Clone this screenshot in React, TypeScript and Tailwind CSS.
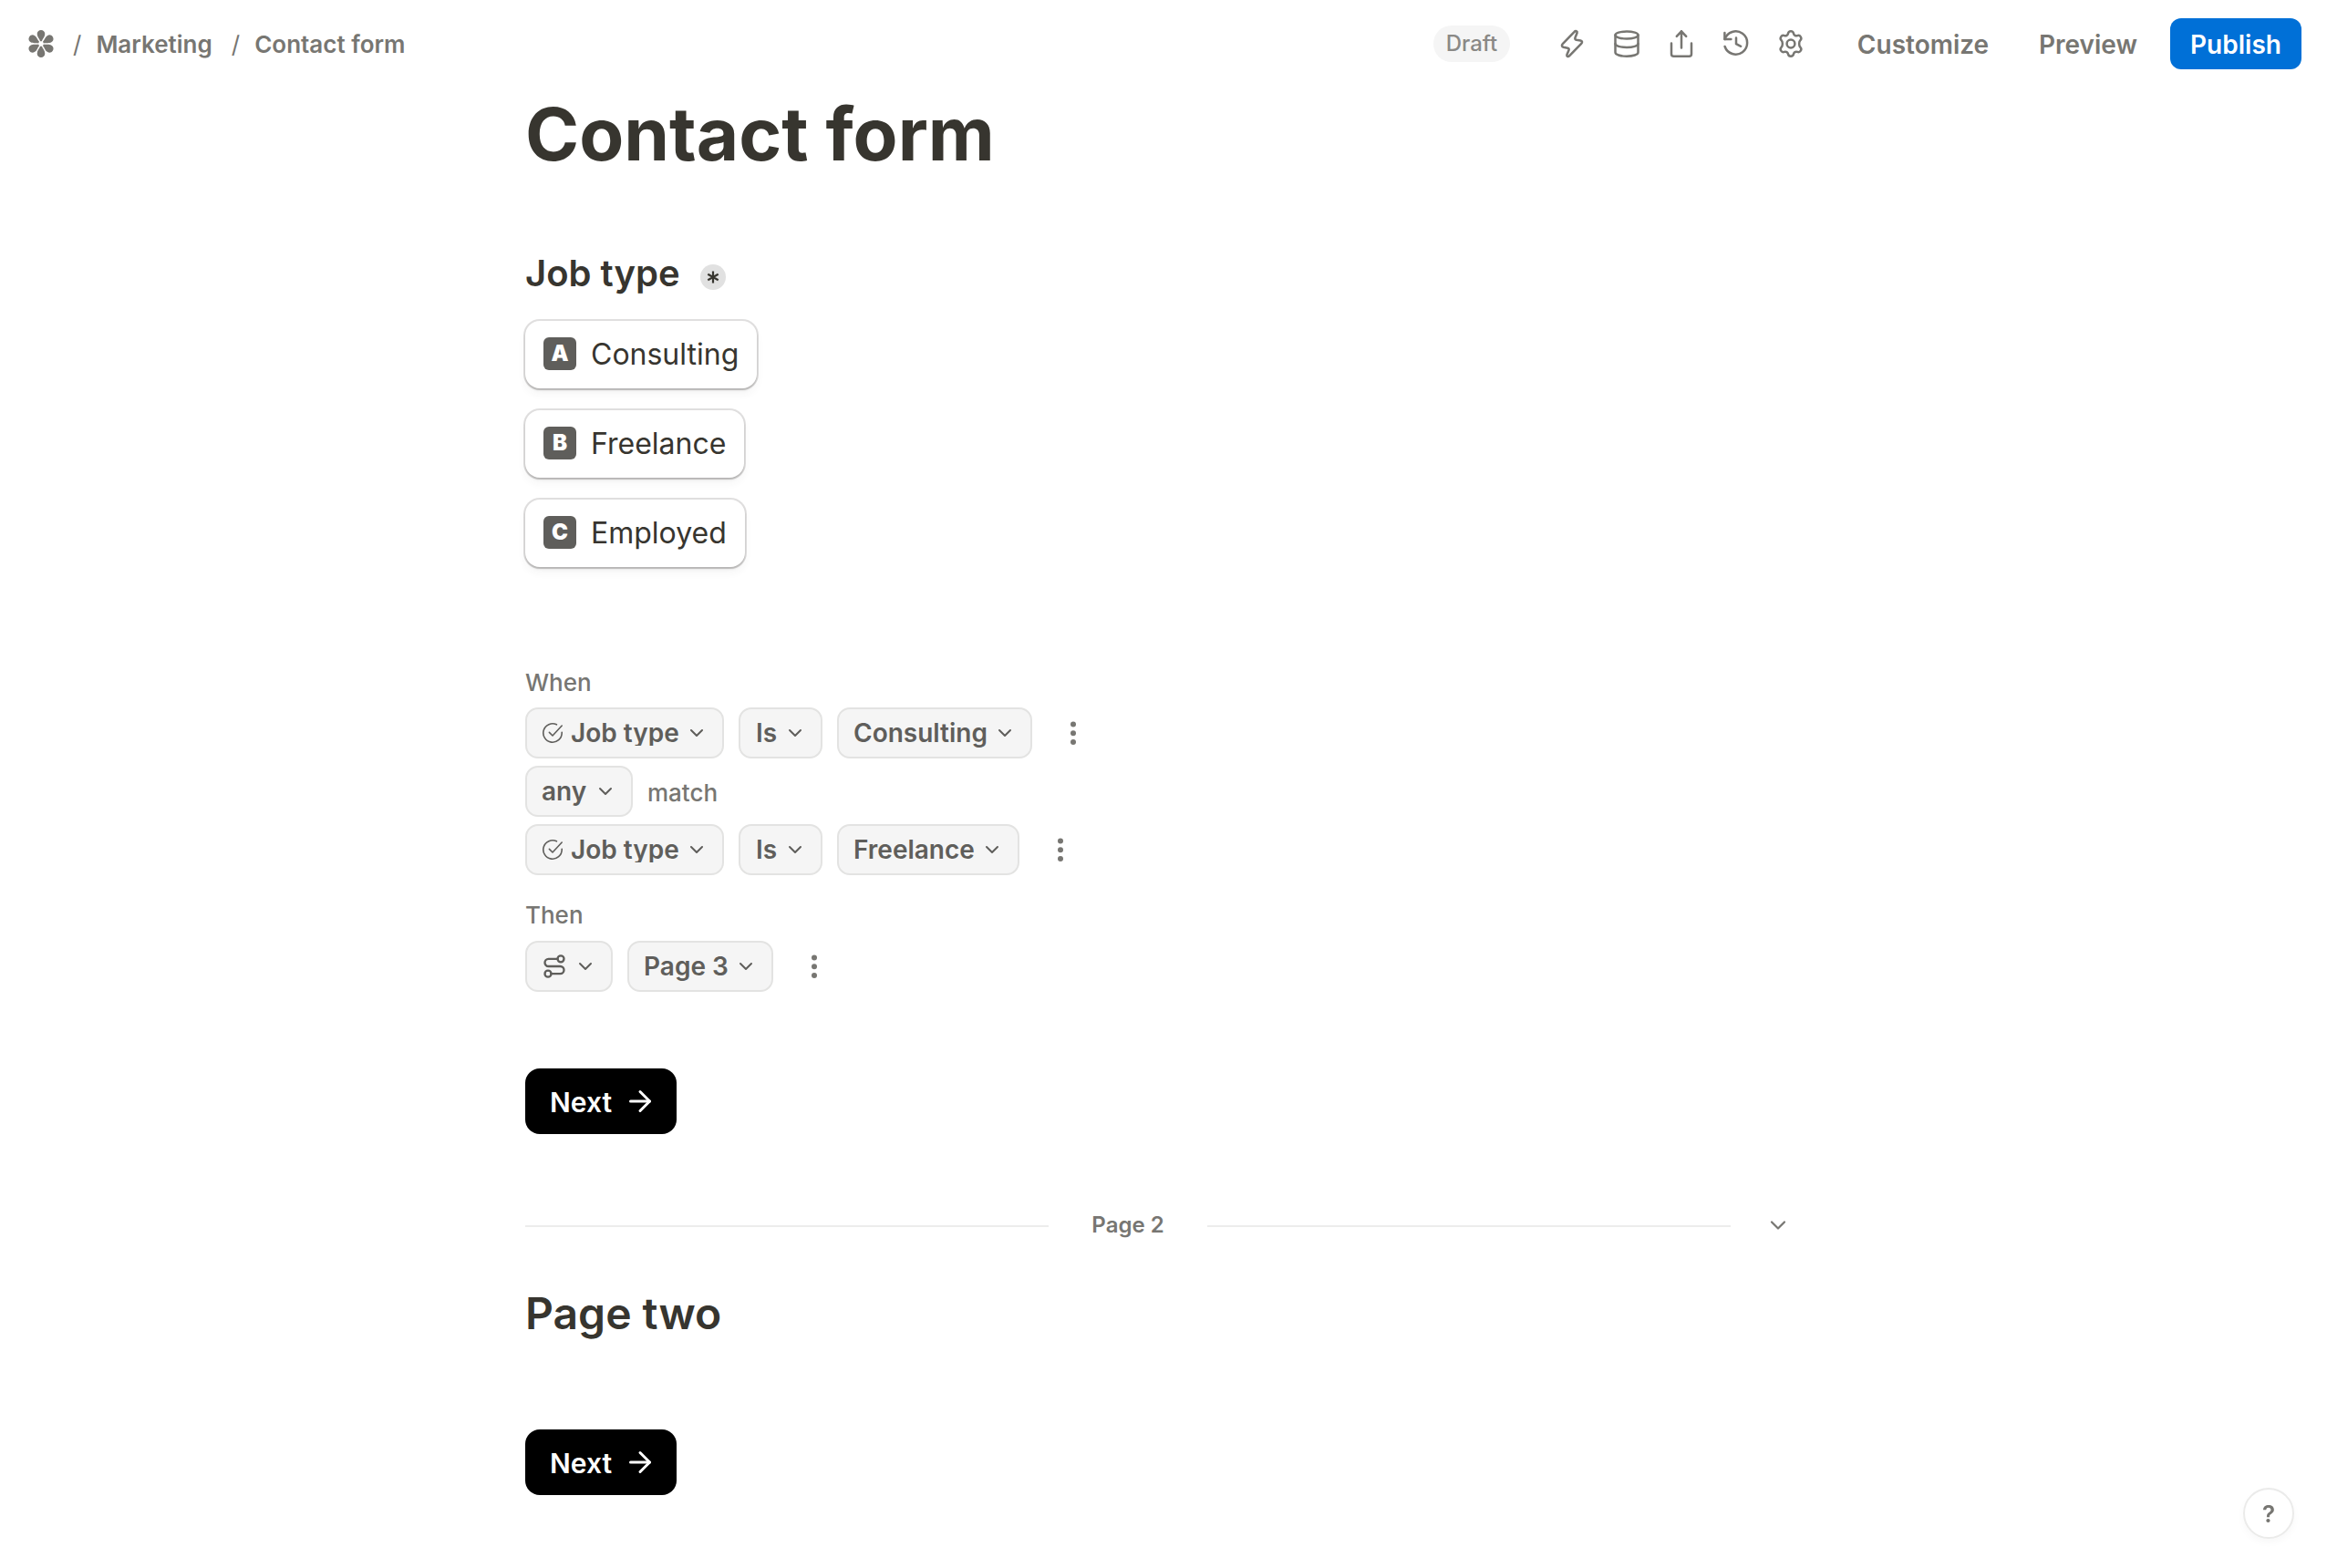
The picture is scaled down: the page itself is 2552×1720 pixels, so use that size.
import type { ReactNode } from 'react';
import { ArrowRight, ChevronDown, Route } from 'lucide-react';

interface IconProps {
  children: ReactNode;
}

const options = [
  { letter: 'A', label: 'Consulting' },
  { letter: 'B', label: 'Freelance' },
  { letter: 'C', label: 'Employed' },
];

function ToolbarIcon({ children }: IconProps) {
  return (
    <button className="flex h-9 w-9 items-center justify-center">
      <svg
        className="h-9 w-9"
        viewBox="-18 -18 36 36"
        fill="none"
        stroke="currentColor"
        strokeWidth={2.5}
        strokeLinecap="round"
        strokeLinejoin="round"
      >
        {children}
      </svg>
    </button>
  );
}

function Logo() {
  return (
    <svg className="h-[30px] w-7" viewBox="-14 -15 28 30" fill="currentColor">
      {[0, 60, 120, 180, 240, 300].map(angle => (
        <path
          key={angle}
          transform={`rotate(${angle})`}
          d="M-.9 -2.8C-1.6 -5.2 -4.3 -7.4 -4.3 -10.7C-4.3 -13.2 -2.4 -14.9 0 -14.9C2.4 -14.9 4.3 -13.2 4.3 -10.7C4.3 -7.4 1.6 -5.2 .9 -2.8Z"
        />
      ))}
    </svg>
  );
}

function CheckIcon() {
  return (
    <svg
      className="mr-2 h-6 w-6 shrink-0"
      viewBox="0 0 24 24"
      fill="none"
      stroke="currentColor"
      strokeWidth={1.6}
      strokeLinecap="round"
      strokeLinejoin="round"
    >
      <path d="M22.2 11.2V12A10.2 10.2 0 1 1 16.4 2.8" />
      <path d="M8.4 11.4 12 15 22.2 4" />
    </svg>
  );
}

function Chip({ children, className }: { children: ReactNode; className?: string }) {
  return (
    <button
      className={`flex h-14 items-center justify-between rounded-[14px] border-2 border-[#e3e3e2] bg-[#f5f5f5] pr-4 text-[28px] leading-[52px] font-semibold text-[#5f5e5b] ${className ?? ''}`}
    >
      {children}
      <ChevronDown className="h-6 w-6 shrink-0" strokeWidth={2} />
    </button>
  );
}

function MoreButton() {
  return (
    <button className="ml-[17px] flex h-14 w-14 items-center justify-center text-[#777672]">
      <svg className="h-7 w-2" viewBox="0 0 8 28" fill="currentColor">
        <circle cx="4" cy="4.4" r="3" />
        <circle cx="4" cy="14.2" r="3" />
        <circle cx="4" cy="24" r="3" />
      </svg>
    </button>
  );
}

function Condition({ value, valueClass }: { value: string; valueClass: string }) {
  return (
    <div className="flex gap-4">
      <Chip className="w-[218px] pl-4">
        <span className="flex items-center">
          <CheckIcon />
          <span className="overflow-hidden leading-none whitespace-nowrap">Job type</span>
        </span>
      </Chip>
      <Chip className="w-[92px] pl-[17px]">Is</Chip>
      <div className="flex">
        <Chip className={valueClass}>{value}</Chip>
        <MoreButton />
      </div>
    </div>
  );
}

function NextButton({ className }: { className: string }) {
  return (
    <button
      className={`flex h-[72px] w-[166px] items-center justify-between rounded-2xl bg-black pr-[22px] pl-[27px] text-[30px] font-semibold text-white ${className}`}
    >
      <span className="pt-0.5">Next</span>
      <ArrowRight className="h-9 w-9" strokeWidth={2} />
    </button>
  );
}

export default function App() {
  return (
    <div className="h-[1720px] w-[2552px] overflow-hidden bg-white font-['Inter',sans-serif] text-[#37352f]">
      <header className="flex h-24 items-center justify-between pr-7 pl-[31px] text-[#777672]">
        <nav className="flex items-center text-[26px] font-semibold">
          <Logo />
          <span className="ml-[21px] font-normal">/</span>
          <span className="ml-4">Marketing</span>
          <span className="ml-[21px] font-normal">/</span>
          <span className="ml-4">Contact form</span>
        </nav>

        <div className="flex items-center">
          <span className="flex h-10 w-[84px] items-center justify-center rounded-full bg-[#f5f5f5] text-2xl font-medium text-[#8a8986]">
            Draft
          </span>
          <div className="ml-[50px] flex gap-6">
            <ToolbarIcon>
              <path d="M2.6 -13.1 -10.2 .2C-11.8 1.8 -11 3.4 -9.4 3.8L-4.8 4.8C-3.4 5.1 -3 5.9 -3.5 7.1L-5.6 12C-6.1 13.7 -4.3 14.7 -3 13.3L10.2 -.2C11.8 -1.8 11 -3.2 9.4 -3.5L4.8 -4.3C3.4 -4.6 3 -5.4 3.5 -6.7L5.6 -12C6.1 -13.7 3.9 -14.6 2.6 -13.1Z" />
            </ToolbarIcon>
            <ToolbarIcon>
              <ellipse cx="0" cy="-9.5" rx="12.5" ry="4" />
              <path d="M-12.5 -9.5V9.5C-12.5 11.9 -7 13.7 0 13.7S12.5 11.9 12.5 9.5V-9.5" />
              <path d="M-12.5 0C-12.5 2.3 -7 4 0 4S12.5 2.3 12.5 0" />
            </ToolbarIcon>
            <ToolbarIcon>
              <path d="M0 4.5V-13.7M-5.2 -8.2 0 -13.7 5.2 -8.2" />
              <path d="M-11 -.5V11.2Q-11 13.7 -8.5 13.7H8.5Q11 13.7 11 11.2V-.5" />
            </ToolbarIcon>
            <ToolbarIcon>
              <path d="M-12.6 -12V-5H-5.6" />
              <path d="M-12.4 -5A12.6 12.6 0 1 1 -12.4 3" />
              <path d="M0 -6.5V0.2L5.2 2.8" />
            </ToolbarIcon>
            <ToolbarIcon>
              <circle cx="0" cy="0" r="4.4" />
              <path d="M-3 -11.2C-2.4 -14.5 2.4 -14.5 3 -11.2C3.4 -9.2 5.2 -8.2 7.1 -8.9C10.2 -10.1 12.7 -6.1 10.4 -3.8C8.7 -2.1 8.7 2.1 10.4 3.8C12.7 6.1 10.2 10.1 7.1 8.9C5.2 8.2 3.4 9.2 3 11.2C2.4 14.5 -2.4 14.5 -3 11.2C-3.4 9.2 -5.2 8.2 -7.1 8.9C-10.2 10.1 -12.7 6.1 -10.4 3.8C-8.7 2.1 -8.7 -2.1 -10.4 -3.8C-12.7 -6.1 -10.2 -10.1 -7.1 -8.9C-5.2 -8.2 -3.4 -9.2 -3 -11.2Z" />
            </ToolbarIcon>
          </div>
          <div className="flex items-center pt-0.5 text-[28px] font-semibold">
            <button className="ml-[54px] w-[146px]">Customize</button>
            <button className="ml-[52px] w-[112px]">Preview</button>
          </div>
          <button className="ml-[34px] h-14 w-36 rounded-xl bg-[#0070d7] pt-0.5 text-[28px] font-semibold text-white">
            Publish
          </button>
        </div>
      </header>

      <main className="ml-[576px] w-[1400px] pt-[3px]">
        <h1 className="text-[80px] leading-[96px] font-bold">Contact form</h1>

        <div className="mt-[77px] flex h-14 items-center">
          <h2 className="text-[40px] leading-[56px] font-semibold">Job type</h2>
          <span className="mt-2 ml-[22px] flex h-7 w-7 items-center justify-center rounded-full bg-[#e1e1e1]">
            <svg className="h-3.5 w-3.5" viewBox="-7 -7 14 14" fill="none" stroke="currentColor" strokeWidth={2.2}>
              <path d="M0 -6.5V6.5M-5.7 -3.3 5.7 3.3M-5.7 3.3 5.7 -3.3" />
            </svg>
          </span>
        </div>

        <div className="mt-6 flex flex-col items-start gap-6">
          {options.map(option => (
            <button
              key={option.letter}
              className="flex h-[74px] items-center gap-4 rounded-2xl bg-white px-5 text-[32px] shadow-[0_0_0_2px_rgba(61,59,53,0.16),0_2px_2px_rgba(61,59,53,0.22),0_6px_10px_rgba(61,59,53,0.05)]"
            >
              <span className="-mt-0.5 flex h-9 w-9 items-center justify-center rounded-md bg-[#5f5e5b] text-2xl font-black text-white">
                {option.letter}
              </span>
              {option.label}
            </button>
          ))}
        </div>

        {/* Conditional logic */}
        <section className="mt-[107px] text-[26px] font-medium text-[#777672]">
          <p className="leading-10">When</p>
          <div className="mt-[7px] flex flex-col gap-2">
            <Condition value="Consulting" valueClass="w-[214px] pl-4" />
            <div className="flex items-center gap-4">
              <Chip className="w-[118px] pl-4">any</Chip>
              <span className="pt-0.5">match</span>
            </div>
            <Condition value="Freelance" valueClass="w-[200px] pl-4" />
          </div>
          <p className="mt-6 leading-10">Then</p>
          <div className="mt-2 flex">
            <Chip className="w-24 pl-4">
              <Route className="h-7 w-7" strokeWidth={2} />
            </Chip>
            <Chip className="ml-4 w-40 pl-4">Page 3</Chip>
            <MoreButton />
          </div>
        </section>

        <NextButton className="mt-[84px]" />

        {/* Page break */}
        <div className="mt-[76px] flex h-12 items-center text-[#777672]">
          <div className="mt-0.5 h-0.5 w-[574px] bg-[#ededec]" />
          <span className="w-[174px] text-center text-2xl font-semibold">Page 2</span>
          <div className="mt-0.5 h-0.5 w-[574px] bg-[#ededec]" />
          <ChevronDown className="ml-[38px] h-7 w-7" strokeWidth={1.9} />
        </div>

        <h2 className="mt-11 text-[48px] leading-[58px] font-semibold">Page two</h2>

        <NextButton className="mt-[98px]" />
      </main>

      <button className="fixed right-9 bottom-8 flex h-14 w-14 items-center justify-center rounded-full border-2 border-[#ebebea] bg-white text-[26px] font-semibold text-[#777672] shadow-[0_4px_8px_rgba(0,0,0,0.03)]">
        ?
      </button>
    </div>
  );
}
